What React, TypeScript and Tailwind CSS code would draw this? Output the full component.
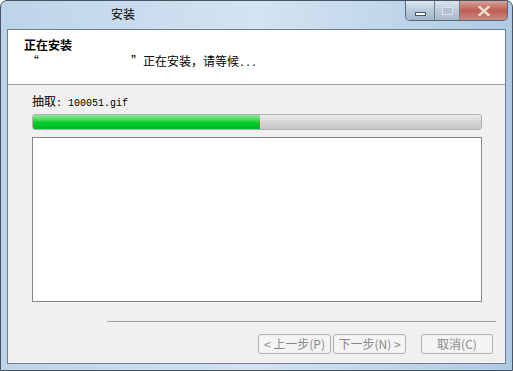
const cjk = { fontFamily: '"Noto Sans CJK SC", "Noto Sans", sans-serif' };
const mono = { fontFamily: '"Liberation Mono", "Noto Sans CJK SC", monospace' };

const CaptionButtons = () => {
  return (
    <div className="flex h-[20px] items-stretch self-start mr-[4px] rounded-b-[5px] border border-t-0 border-[#56657a] overflow-hidden">
      <div className="w-[29px] flex items-end justify-center pb-[4px] bg-linear-to-b from-[#dde7f1] via-[#b9c9da] to-[#a3b6ca] border-r border-[#6d7e92]">
        <div className="w-[11px] h-[4px] bg-white border border-[#45546a]" />
      </div>
      <div className="w-[25px] flex items-center justify-center bg-linear-to-b from-[#dbe5ef] via-[#bccbda] to-[#a8b9cb] border-r border-[#6d7e92]">
        <div className="w-[11px] h-[8px] border border-[#d8e2ec] bg-[#b2c2d2]" />
      </div>
      <div className="w-[47px] flex items-center justify-center bg-linear-to-b from-[#d6a39b] via-[#bd5e52] to-[#c98a80]">
        <svg width="12" height="10" viewBox="0 0 12 10" aria-hidden="true">
          <path d="M1.5 1 L10.5 9 M10.5 1 L1.5 9" stroke="#f1ddd6" strokeWidth="2.4" strokeLinecap="square" />
        </svg>
      </div>
    </div>
  );
};

const WizButton = ({ children, className = '' }: { children: React.ReactNode; className?: string }) => {
  return (
    <div
      className={`h-[20px] flex items-center justify-center rounded-[3px] border border-[#adb2b5] bg-[#f4f4f4] text-[12px] text-[#8a8a8a] leading-none ${className}`}
      style={cjk}
    >
      {children}
    </div>
  );
};

export default function App() {
  return (
    <div className="w-[513px] h-[371px] bg-white">
      <div className="h-full flex flex-col rounded-t-[7px] border border-[#4a5460] bg-linear-to-r from-[#bcd4e9] via-[#d3e4f2] to-[#aecae2]">
        {/* title bar */}
        <div className="h-[28px] flex items-start">
          <div className="pl-[110px] pt-[5px] text-[12px] leading-[16px] text-black flex-1" style={cjk}>
            安装
          </div>
          <CaptionButtons />
        </div>

        {/* client area */}
        <div className="flex-1 flex flex-col mx-[6px] mb-[6px] border border-[#6f7f90] bg-[#f0f0f0]">
          <div className="h-[55px] bg-white border-b border-[#a0a0a0] pl-[16px] pt-[7px]" style={cjk}>
            <div className="text-[12px] leading-[16px] font-bold text-black">正在安装</div>
            <div className="text-[12px] leading-[16px] text-black pl-[3px]">
              “<span className="inline-block w-[92px]" />”正在安装，请等候<span className="text-[10px] text-black" style={mono}>...</span>
            </div>
          </div>

          <div className="flex-1 flex flex-col">
            <div className="pl-[24px] pt-[8px]">
              <div className="text-[12px] leading-[16px] text-black">
                <span style={cjk}>抽取</span>
                <span className="text-[10px]" style={mono}>: 100051.gif</span>
              </div>
              <div className="mt-[2px] h-[16px] w-[450px] rounded-[3px] border border-[#b0b0b0] bg-linear-to-b from-[#ececec] via-[#d4d4d4] to-[#c6c6c6] overflow-hidden">
                <div className="h-full w-[227px] rounded-l-[2px] bg-linear-to-b from-[#8ae79a] via-[#00d12b] to-[#00b424]" />
              </div>
              <div className="mt-[7px] h-[165px] w-[450px] bg-white border border-[#828790]" />
            </div>

            <div className="mt-[19px] ml-[99px] mr-[9px] h-px bg-[#a0a0a0]" />

            <div className="mt-[12px] flex justify-end pr-[12px]">
              <WizButton className="w-[73px]">&lt; 上一步(P)</WizButton>
              <WizButton className="w-[73px] ml-[2px]">下一步(N) &gt;</WizButton>
              <WizButton className="w-[72px] ml-[15px]">取消(C)</WizButton>
            </div>
          </div>
        </div>
      </div>
    </div>
  );
}
